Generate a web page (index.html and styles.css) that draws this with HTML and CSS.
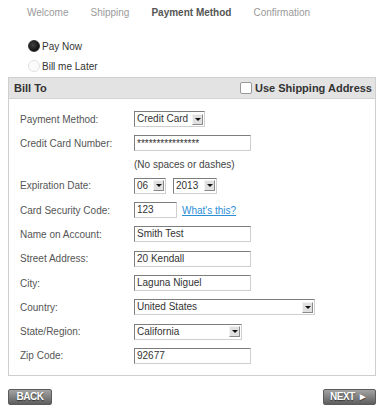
FILE: index.html
```html
<!DOCTYPE html>
<html>
<head>
<meta charset="utf-8">
<link rel="stylesheet" href="styles.css">
</head>
<body>
<nav class="steps">
  <span class="step">Welcome</span>
  <span class="step">Shipping</span>
  <span class="step active">Payment Method</span>
  <span class="step">Confirmation</span>
</nav>
<div class="radios">
  <div class="radio-row"><span class="radio checked"></span><span>Pay Now</span></div>
  <div class="radio-row"><span class="radio"></span><span>Bill me Later</span></div>
</div>
<section class="box">
  <header class="box-head">
    <span class="title">Bill To</span>
    <span class="ship"><span class="checkbox"></span>Use Shipping Address</span>
  </header>
  <div class="form">
    <div class="row"><span class="label">Payment Method:</span><span class="select w-pay"><span class="val">Credit Card</span><span class="drop"></span></span></div>
    <div class="row"><span class="label">Credit Card Number:</span><span class="input w-std stars">****************</span></div>
    <div class="row note"><span class="label"></span><span>(No spaces or dashes)</span></div>
    <div class="row"><span class="label">Expiration Date:</span><span class="pair"><span class="select w-mon"><span class="val">06</span><span class="drop"></span></span><span class="select w-yr"><span class="val">2013</span><span class="drop"></span></span></span></div>
    <div class="row"><span class="label">Card Security Code:</span><span class="input w-cvv">123</span><a class="link" href="#">What's this?</a></div>
    <div class="row"><span class="label">Name on Account:</span><span class="input w-std">Smith Test</span></div>
    <div class="row"><span class="label">Street Address:</span><span class="input w-std">20 Kendall</span></div>
    <div class="row"><span class="label">City:</span><span class="input w-std">Laguna Niguel</span></div>
    <div class="row"><span class="label">Country:</span><span class="select w-country"><span class="val">United States</span><span class="drop"></span></span></div>
    <div class="row"><span class="label">State/Region:</span><span class="select w-state"><span class="val">California</span><span class="drop"></span></span></div>
    <div class="row"><span class="label">Zip Code:</span><span class="input w-std">92677</span></div>
  </div>
</section>
<div class="buttons">
  <span class="btn">BACK</span>
  <span class="btn">NEXT <span class="arrow">&#9658;</span></span>
</div>
</body>
</html>
```

FILE: styles.css
```css
* { box-sizing: border-box; }
body {
  margin: 0;
  font-family: "Liberation Sans", Arial, sans-serif;
  font-size: 10px;
  color: #444;
  background: #fff;
}
.steps {
  display: flex;
  gap: 22px;
  padding: 6px 0 0 27px;
  line-height: 14px;
  color: #9a9a9a;
}
.step.active { font-weight: bold; color: #555; }

.radios { padding: 16px 0 0 28px; }
.radio-row {
  display: flex;
  align-items: center;
  height: 20px;
  gap: 2px;
  color: #333;
}
.radio {
  width: 12px;
  height: 12px;
  border-radius: 50%;
  border: 1px solid #e2e2e2;
  background: #fbfbfb;
}
.radio.checked {
  border-color: #333;
  background: radial-gradient(circle at 40% 40%, #444, #111 70%);
}

.box {
  margin: 1px 8px 0 8px;
  border: 1px solid #cfcfcf;
}
.box-head {
  height: 21px;
  background: #e3e3e3;
  border-bottom: 1px solid #d2d2d2;
  display: flex;
  align-items: center;
  justify-content: space-between;
  padding: 0 3px 0 5px;
  font-size: 11px;
  font-weight: bold;
  color: #333;
}
.ship { display: flex; align-items: center; gap: 3px; }
.checkbox {
  width: 12px;
  height: 12px;
  background: #fff;
  border: 1px solid #999;
  border-radius: 2px;
}

.form {
  display: flex;
  flex-direction: column;
  gap: 8.3px;
  padding: 12px 0 11px 11px;
}
.row {
  display: flex;
  align-items: center;
  height: 16px;
}
.row.note {
  height: 11px;
  line-height: 11px;
  margin-top: -1px;
  color: #444;
}
.label { width: 114px; flex: none; color: #555; }

.input, .select {
  height: 16px;
  border: 1px solid;
  border-color: #7d7d7d #cfcfcf #cfcfcf #7d7d7d;
  background: #fff;
  color: #333;
  display: flex;
  align-items: center;
  padding-left: 2px;
  line-height: 14px;
}
.select { justify-content: space-between; padding-right: 1px; }
.drop {
  width: 11px;
  height: 11px;
  background: #e0e0e0;
  border: 1px solid;
  border-color: #f4f4f4 #8a8a8a #8a8a8a #f4f4f4;
  position: relative;
  flex: none;
}
.drop::after {
  content: "";
  position: absolute;
  left: 2px;
  top: 3px;
  border-left: 3px solid transparent;
  border-right: 3px solid transparent;
  border-top: 3px solid #111;
}
.stars { align-items: flex-start; padding-top: 1px; }

.w-pay { width: 71px; }
.w-std { width: 117px; }
.w-mon { width: 32px; }
.w-yr { width: 44px; }
.w-cvv { width: 43px; }
.w-country { width: 181px; }
.w-state { width: 108px; }
.pair { display: flex; gap: 7px; }
.link {
  margin-left: 5px;
  color: #2b8fd6;
  text-decoration: underline;
}

.buttons {
  display: flex;
  justify-content: space-between;
  padding: 13px 8px 0 8px;
}
.btn {
  height: 16px;
  padding: 0 8px;
  border-radius: 2px;
  background: linear-gradient(#a3a3a3, #5e5e5e);
  border: 1px solid #5a5a5a;
  color: #fff;
  font-weight: bold;
  font-size: 10px;
  letter-spacing: -0.5px;
  line-height: 14px;
  text-shadow: 0 1px 1px #333;
  display: flex;
  align-items: center;
}
.btn:first-child { width: 44px; justify-content: center; }
.btn:last-child { width: 53px; padding-left: 6px; }
.arrow { font-size: 10px; margin-left: 3px; letter-spacing: 0; }
```
